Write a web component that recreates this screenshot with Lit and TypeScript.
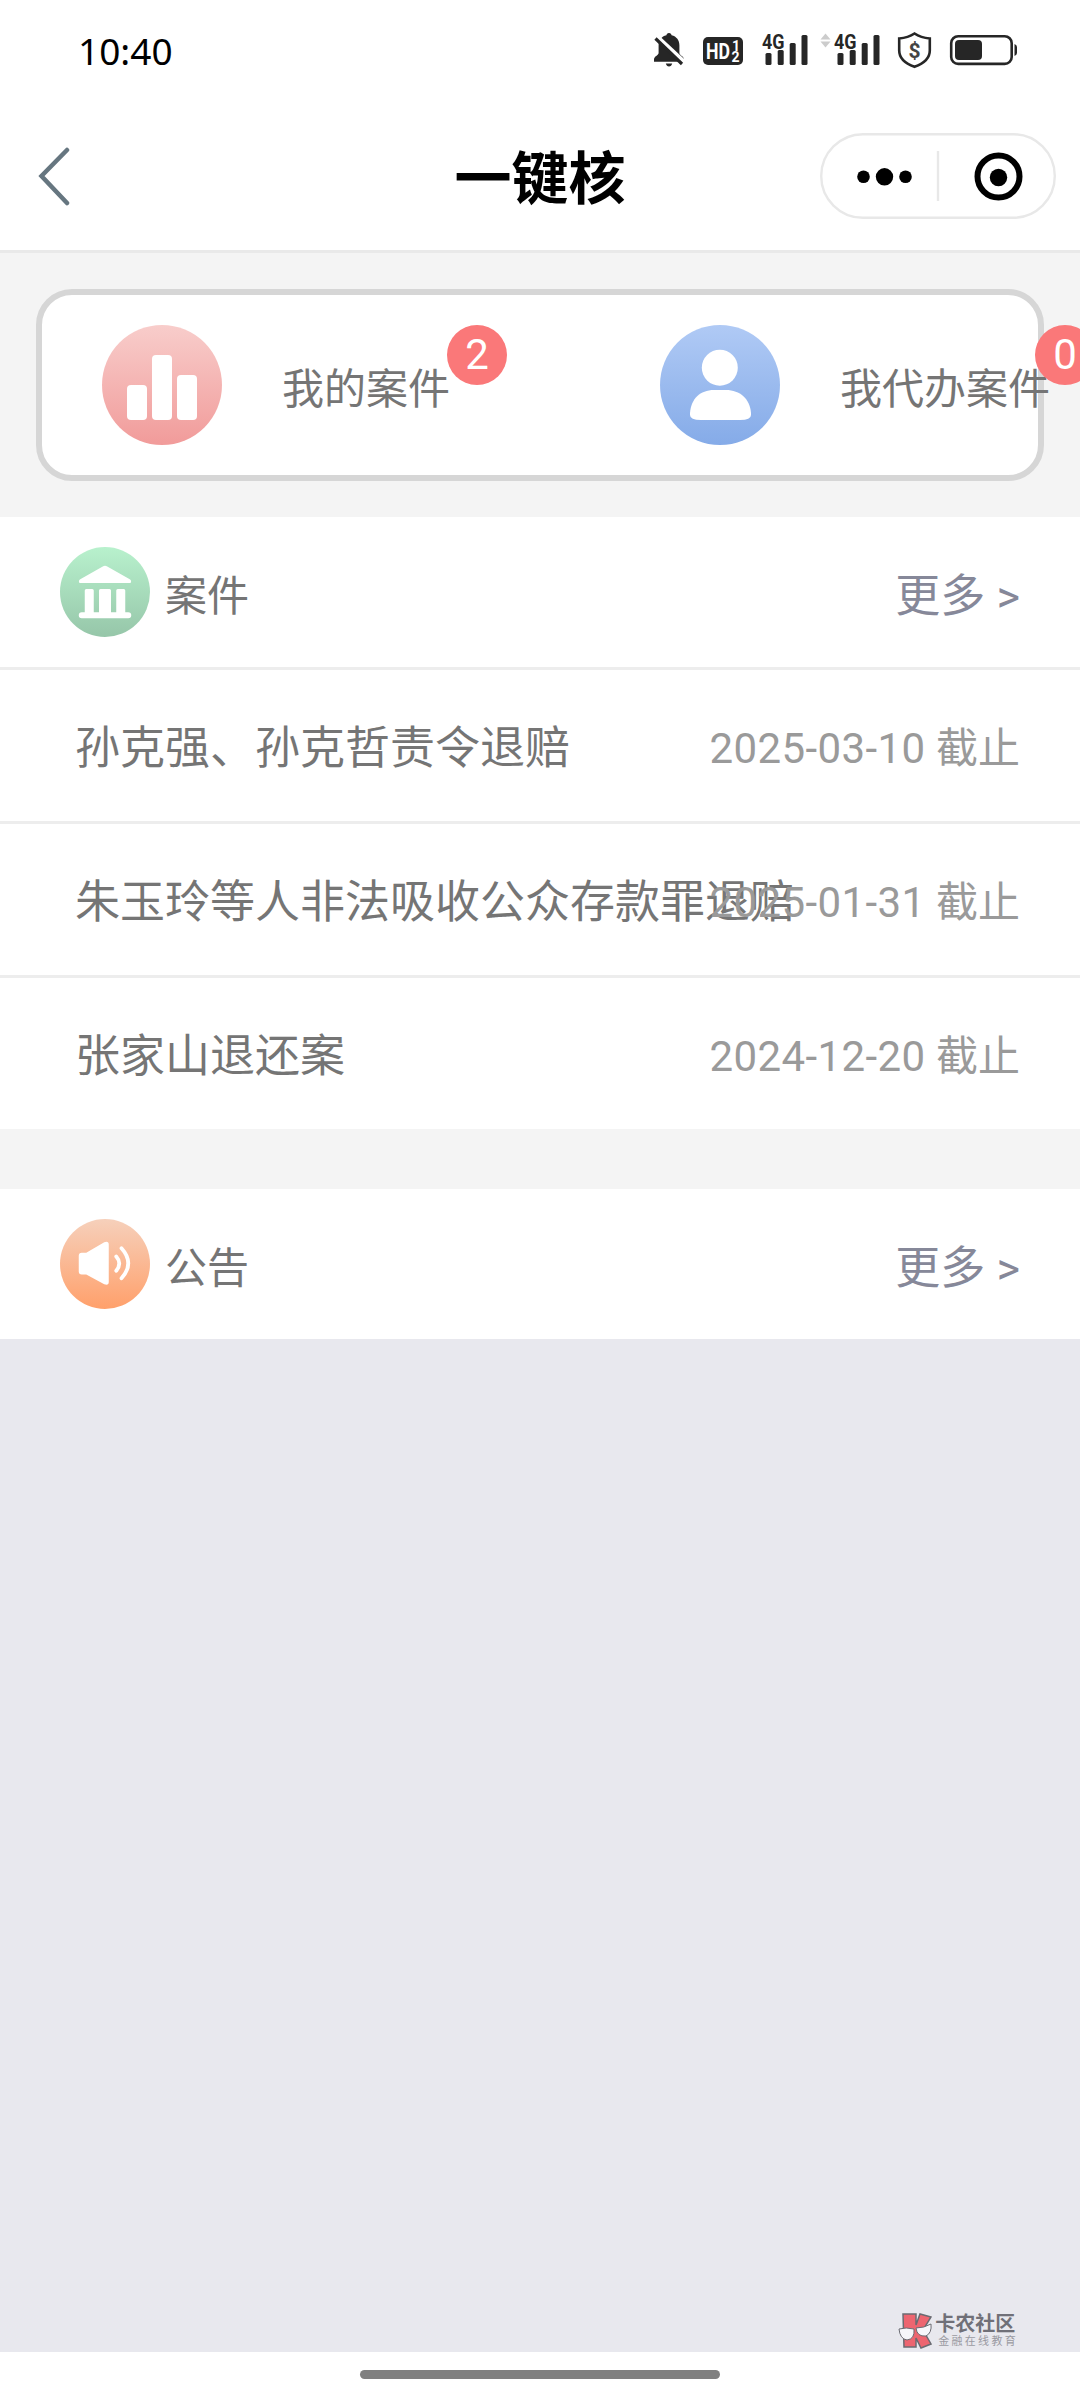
import { LitElement, html, css, svg } from 'lit';
import { customElement, property } from 'lit/decorators.js';

interface CaseItem {
    title: string;
    deadline: string;
}

const signalBars = (x: number) => svg`
    <text class="net" x=${x} y="48.5" textLength="22.5" lengthAdjust="spacingAndGlyphs">4G</text>
    <rect x=${x + 3.5} y="53" width="6" height="12" rx="1.5"/>
    <rect x=${x + 15.7} y="50" width="6" height="15" rx="1.5"/>
    <rect x=${x + 27.7} y="43" width="6" height="22" rx="1.5"/>
    <rect x=${x + 39.5} y="35" width="6" height="30" rx="1.5"/>
`;

@customElement('status-bar')
export class StatusBar extends LitElement {
    static styles = css`
        :host {
            display: flex;
            justify-content: space-between;
            height: 100px;
            color: #000;
            font-family: "Noto Sans", sans-serif;
        }
        .time {
            padding-left: 78px;
            font-size: 37px;
            font-weight: 450;
            line-height: 101px;
        }
        svg {
            width: 440px;
            height: 100px;
            fill: #262626;
        }
        .hd {
            font: 700 22px Roboto, sans-serif;
            fill: #fff;
        }
        .small {
            font: 700 14px Roboto, sans-serif;
            fill: #fff;
        }
        .net {
            font: 700 21px Roboto, sans-serif;
        }
        .money {
            font: 700 21px Roboto, sans-serif;
            fill: #444;
            text-anchor: middle;
        }
    `;

    render() {
        return html`
            <span class="time">10:40</span>
            <svg viewBox="640 0 440 100">
                <path d="M669 33c1.6 0 2.4 1 2.6 2.3 5 1.2 7.8 5 7.8 10.2v7.500c0 2.500 4.600 3 4.600 6.600v2.200h-30v-2.200c0-3.600 4.600-4.100 4.600-6.600v-7.500c0-5.200 2.800-9 7.800-10.200.2-1.300 1-2.300 2.600-2.300z"/>
                <path d="M665.800 63.500h6.400q-.8 3-3.200 3t-3.200-3z"/>
                <path d="M656 35.500l29 27" stroke="#fff" stroke-width="4"/>
                <path d="M655.500 38.500l26.500 25.500" stroke="#262626" stroke-width="3.200"/>
                <rect x="703" y="37" width="40" height="28" rx="5"/>
                <text class="hd" x="706" y="59" textLength="24" lengthAdjust="spacingAndGlyphs">HD</text>
                <text class="small" x="732" y="50.500">1</text>
                <text class="small" x="731.500" y="62">2</text>
                ${signalBars(762)}
                <path d="M825.500 33.500l5 6h-10zM825.500 47.500l5-6h-10z" fill="#ccc"/>
                ${signalBars(834)}
                <path d="M914.500 33.500c4.500 3 9.500 4.500 15.300 5v12c0 8-6 13-15.300 16.300-9.300-3.300-15.300-8.300-15.300-16.300v-12c5.800-.5 10.800-2 15.300-5z" fill="none" stroke="#262626" stroke-width="2.600"/>
                <text class="money" x="914.500" y="57.500">$</text>
                <rect x="951.200" y="36.200" width="60.500" height="27.700" rx="7" fill="none" stroke="#262626" stroke-width="2.600"/>
                <rect x="955" y="40" width="27" height="20" rx="4"/>
                <path d="M1014.500 44q2.500 1 2.500 3v6q0 2-2.500 3z"/>
            </svg>
        `;
    }
}

@customElement('nav-header')
export class NavHeader extends LitElement {
    @property() heading = '';

    static styles = css`
        :host {
            box-sizing: border-box;
            display: grid;
            grid-template-columns: 236px 1fr 236px;
            align-items: center;
            height: 153px;
            padding: 1px 24px 0;
            border-bottom: 3px solid #e9e9e9;
        }
        .back {
            width: 36px;
            height: 60px;
            margin-left: 12px;
        }
        .title {
            padding-top: 9px;
            font: 600 57px/84px Roboto, "Noto Sans CJK SC", sans-serif;
            color: #000;
            text-align: center;
        }
        .capsule {
            width: 236px;
            height: 86px;
        }
    `;

    render() {
        return html`
            <svg class="back" viewBox="0 0 36 60">
                <path d="M31 4L5.500 30 31 57" fill="none" stroke="#667680" stroke-width="4.500" stroke-linecap="round"/>
            </svg>
            <div class="title">${this.heading}</div>
            <svg class="capsule" viewBox="0 0 236 86">
                <rect x="1.200" y="1.200" width="233.600" height="83.600" rx="41.800" fill="#fff" stroke="#e8e8e8" stroke-width="2.400"/>
                <path d="M118 18v50" stroke="#e8e8e8" stroke-width="2.400"/>
                <circle cx="43.500" cy="43.800" r="6.300"/>
                <circle cx="64.500" cy="43.800" r="8.700"/>
                <circle cx="85.500" cy="43.800" r="6.300"/>
                <circle cx="178.500" cy="43.500" r="21" fill="none" stroke="#000" stroke-width="6"/>
                <circle cx="178.500" cy="44.500" r="8.700"/>
            </svg>
        `;
    }
}

@customElement('round-icon')
export class RoundIcon extends LitElement {
    @property() name = '';

    static styles = css`
        :host {
            display: block;
            flex: none;
            border-radius: 50%;
        }
        :host([name="chart"]) {
            background: linear-gradient(#f8cdcb, #f19b9a);
        }
        :host([name="user"]) {
            background: linear-gradient(#b0caf5, #85abe8);
        }
        :host([name="court"]) {
            background: linear-gradient(#b8f1cd, #96c6a9);
        }
        :host([name="sound"]) {
            background: linear-gradient(#f6d0bb, #ffa06b);
        }
        svg {
            display: block;
            width: 100%;
            height: 100%;
            fill: #fff;
        }
    `;

    shape() {
        switch (this.name) {
            case 'chart':
                return svg`
                    <rect x="25" y="60" width="20" height="35" rx="4"/>
                    <rect x="50" y="30" width="20" height="65" rx="4"/>
                    <rect x="75" y="50" width="20" height="45" rx="4"/>`;
            case 'user':
                return svg`
                    <circle cx="59.800" cy="42.700" r="18"/>
                    <path d="M30 88C31 74 40 65 54 65H66C80 65 90 74 91 88V90Q91 95 80 95H41Q30 95 30 90z"/>`;
            case 'court':
                return svg`
                    <path d="M57 26Q60 24 63 26L93 43Q96 45 94 48H26Q24 45 27 43z"/>
                    <path d="M33 58Q33 56 35 56H43Q45 56 45 58V87H52V58Q52 56 54 56H66Q68 56 68 58V87H75V58Q75 56 77 56H85Q87 56 87 58V87H91Q95 87 95 91T91 95H29Q25 95 25 91T29 87H33z"/>`;
            default:
                return svg`
                    <path d="M25 49Q25 45 29 45H35L59 31Q65 29 65 34V84Q65 89 59 87L35 74H29Q25 74 25 70z"/>
                    <path d="M75 50Q83 59 75 69M82 39Q100 59 82 79" fill="none" stroke="#fff" stroke-width="5" stroke-linecap="round"/>`;
        }
    }

    render() {
        return html`<svg viewBox="0 0 120 120">${this.shape()}</svg>`;
    }
}

@customElement('section-head')
export class SectionHead extends LitElement {
    @property() icon = '';
    @property() label = '';

    static styles = css`
        :host {
            box-sizing: border-box;
            display: flex;
            align-items: center;
            height: 150px;
            padding: 0 60px;
            background: #fff;
        }
        round-icon {
            width: 90px;
            height: 90px;
        }
        .label {
            flex: 1;
            margin-left: 15px;
            font-size: 42px;
            color: #757575;
        }
        .more {
            font-size: 45px;
            color: #868899;
        }
    `;

    render() {
        return html`
            <round-icon name=${this.icon}></round-icon>
            <span class="label">${this.label}</span>
            <span class="more">更多 &gt;</span>
        `;
    }
}

@customElement('app-root')
export class AppRoot extends LitElement {
    @property({ attribute: false }) cases: CaseItem[] = [
        { title: '孙克强、孙克哲责令退赔', deadline: '2025-03-10' },
        { title: '朱玉玲等人非法吸收公众存款罪退赔', deadline: '2025-01-31' },
        { title: '张家山退还案', deadline: '2024-12-20' },
    ];

    static styles = css`
        :host {
            display: flex;
            flex-direction: column;
            width: 1080px;
            height: 2400px;
            overflow: hidden;
            background: #fff;
            font-family: Roboto, "Noto Sans CJK SC", sans-serif;
            white-space: nowrap;
        }
        .summary {
            padding: 36px;
            background: #f4f4f4;
        }
        .card {
            box-sizing: border-box;
            display: flex;
            align-items: center;
            gap: 210px;
            height: 192px;
            padding: 0 60px;
            border: 6px solid #d6d6d6;
            border-radius: 36px;
            background: #fff;
        }
        .entry {
            position: relative;
            flex: none;
            display: flex;
            align-items: center;
            gap: 60px;
            font-size: 42px;
            color: #757575;
        }
        .entry round-icon {
            width: 120px;
            height: 120px;
        }
        .badge {
            position: absolute;
            top: 0;
            right: -57px;
            width: 60px;
            border-radius: 50%;
            background: #fa7879;
            color: #fff;
            line-height: 60px;
            text-align: center;
        }
        .entry:last-child .badge {
            right: -45px;
        }
        .row {
            display: flex;
            align-items: center;
            height: 151px;
            padding: 0 60px 0 75px;
            border-top: 3px solid #ededed;
        }
        .row .title {
            flex: 1;
            min-width: 0;
            margin-top: -2px;
            font-size: 45px;
            color: #757575;
        }
        .row .deadline {
            margin-top: -3px;
            font-size: 42px;
            color: #9a9a9a;
        }
        .row .date {
            letter-spacing: 0.4px;
        }
        .notice {
            padding-top: 60px;
            background: #f4f4f4;
        }
        .blank {
            flex: 1;
            display: flex;
            justify-content: flex-end;
            align-items: flex-end;
            padding: 0 62px 3px 0;
            background: #e8e8ee;
        }
        .brand {
            display: flex;
            gap: 3px;
            color: #707078;
        }
        .brand svg {
            width: 34px;
            height: 37px;
        }
        .brand .big {
            font-size: 20px;
            font-weight: 700;
            line-height: 24px;
        }
        .brand .tiny {
            margin-left: 3px;
            font-size: 11px;
            letter-spacing: 2.300px;
            line-height: 12px;
            color: #9a9aa2;
        }
        .home {
            box-sizing: border-box;
            display: flex;
            justify-content: center;
            height: 48px;
            padding-top: 18px;
        }
        .home .bar {
            width: 360px;
            height: 9px;
            border-radius: 5px;
            background: #808080;
        }
    `;

    entry(icon: string, name: string, count: number) {
        return html`
            <div class="entry">
                <round-icon name=${icon}></round-icon>
                <span class="name">${name}</span>
                <span class="badge">${count}</span>
            </div>
        `;
    }

    render() {
        return html`
            <status-bar></status-bar>
            <nav-header heading="一键核"></nav-header>
            <div class="summary">
                <div class="card">
                    ${this.entry('chart', '我的案件', 2)}
                    ${this.entry('user', '我代办案件', 0)}
                </div>
            </div>
            <section-head icon="court" label="案件"></section-head>
            ${this.cases.map(item => html`
                <div class="row">
                    <span class="title">${item.title}</span>
                    <span class="deadline"><span class="date">${item.deadline}</span> 截止</span>
                </div>
            `)}
            <div class="notice">
                <section-head icon="sound" label="公告"></section-head>
            </div>
            <div class="blank">
                <div class="brand">
                    <svg viewBox="0 0 34 37">
                        <path d="M5 2h13v11l4-11 11 3-8 13 8 14-10 4-5-10v9H6z" fill="#ed6570" stroke="#6b6b72" stroke-width="1.500"/>
                        <path d="M1 17q7-2 15 0 1 10-7 11-7-1-8-11zM18 16q8 0 15-4 1 9-5 12-9 1-10-8z" fill="#f6f6fa" stroke="#6b6b72"/>
                    </svg>
                    <div>
                        <div class="big">卡农社区</div>
                        <div class="tiny">金融在线教育</div>
                    </div>
                </div>
            </div>
            <div class="home"><div class="bar"></div></div>
        `;
    }
}
